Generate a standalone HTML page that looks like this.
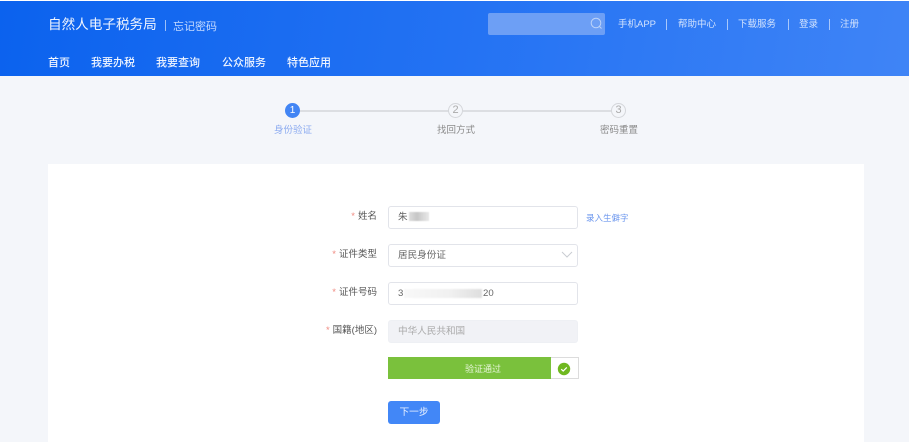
<!DOCTYPE html>
<html><head><meta charset="utf-8">
<style>
html,body{margin:0;padding:0;width:909px;height:443px;overflow:hidden;background:#fff}
body{position:relative;font-family:"Liberation Sans","Noto Sans CJK SC",sans-serif}
div,span{position:absolute;white-space:nowrap;box-sizing:border-box}
.t{line-height:16px;height:16px;filter:blur(.3px)}
.hd{left:0;top:1px;width:909px;height:75px;background:linear-gradient(100deg,#0b62ee 0%,#2372f3 50%,#3f84f6 100%)}
.nav{top:54px;color:#eef4ff;font-size:11px;font-weight:500}
.top{top:16px;color:#d3e3fd;font-size:9.5px}
.sep{width:1px;height:11px;top:19px;background:#a9c8fb}
.lb{color:#555;font-size:9.5px;text-align:right;right:532px}
.lb b{color:#f08a80;font-weight:400;margin-right:3px}
.in{left:388px;width:190px;height:23px;background:#fff;border:1px solid #e2e4ea;border-radius:3px}
.v{left:398px;color:#666;font-size:9.6px}
.st{color:#8a8a8a;font-size:9.5px}
.c{width:15px;height:15px;border-radius:50%;top:103px;border:1px solid #d4d6da;background:#f4f6fa;color:#aaa;font-size:11px;line-height:13px;text-align:center}
.ln{height:2px;top:110px;background:#dcdee2}
</style></head>
<body>
<div style="left:0;top:76px;width:909px;height:366px;background:#f4f6fa"></div>
<div class="hd"></div>
<div class="t" style="left:48px;top:17px;color:#f0f5ff;font-size:13.6px;">自然人电子税务局</div>
<div style="left:165px;top:20px;width:1px;height:11px;background:#9dc0f8"></div>
<div class="t" style="left:173px;top:18px;color:#c4daff;font-size:11px;line-height:18px">忘记密码</div>
<div class="t nav" style="left:48px;top:55px">首页</div>
<div class="t nav" style="left:91px;top:55px">我要办税</div>
<div class="t nav" style="left:156px;top:55px">我要查询</div>
<div class="t nav" style="left:222px;top:55px">公众服务</div>
<div class="t nav" style="left:287px;top:55px">特色应用</div>

<div style="left:488px;top:13px;width:117px;height:22px;background:#6d9ff5;border-radius:2px"></div>
<svg style="position:absolute;left:588px;top:15px" width="16" height="16" viewBox="0 0 16 16" fill="none" stroke="#bcd3f9" stroke-width="1"><circle cx="8" cy="8" r="4.8"/><path d="M11.5 11.5L13.5 13.5"/></svg>
<div class="t top" style="left:618px;top:17px">手机APP</div>
<div class="sep" style="left:666px"></div>
<div class="t top" style="left:678px;top:17px">帮助中心</div>
<div class="sep" style="left:727px"></div>
<div class="t top" style="left:738px;top:17px">下载服务</div>
<div class="sep" style="left:788px"></div>
<div class="t top" style="left:799px;top:17px">登录</div>
<div class="sep" style="left:829px"></div>
<div class="t top" style="left:840px;top:17px">注册</div>

<div class="ln" style="left:300px;width:149px"></div>
<div class="ln" style="left:463px;width:149px"></div>
<div class="c" style="left:285px;background:#4285f4;border-color:#4285f4;color:#fff;font-size:10px;">1</div>
<div class="c" style="left:448px">2</div>
<div class="c" style="left:611px">3</div>
<div class="t st" style="left:274px;top:123px;color:#8cabf0">身份验证</div>
<div class="t st" style="left:437px;top:123px">找回方式</div>
<div class="t st" style="left:600px;top:123px">密码重置</div>

<div style="left:48px;top:164px;width:816px;height:278px;background:#fff"></div>

<div class="t lb" style="top:209px"><b>*</b>姓名</div>
<div class="in" style="top:206px"></div>
<div class="t v" style="top:210px">朱</div>
<div style="left:409px;top:212px;width:20px;height:9px;filter:blur(.6px);background:linear-gradient(90deg,#ddd,#c6c6c6 40%,#d8d8d8 70%,#e8e8e8)"></div>
<div class="t" style="left:586px;top:210px;font-size:8.5px;color:#6e98ee">录入生僻字</div>

<div class="t lb" style="top:247px"><b>*</b>证件类型</div>
<div class="in" style="top:244px"></div>
<div class="t v" style="top:248px">居民身份证</div>
<svg style="position:absolute;left:560px;top:250px" width="14" height="10" viewBox="0 0 14 10" fill="none" stroke="#c9ccd2" stroke-width="1"><path d="M2 2L7 7L12 2"/></svg>

<div class="t lb" style="top:285px"><b>*</b>证件号码</div>
<div class="in" style="top:282px"></div>
<div class="t v" style="top:286px">3</div>
<div style="left:404px;top:289px;width:78px;height:9px;filter:blur(.8px);background:linear-gradient(90deg,#f8f8f8,#f0f0f0 60%,#dedede)"></div>
<div class="t v" style="left:483px;top:286px">20</div>

<div class="t lb" style="top:323px"><b>*</b>国籍(地区)</div>
<div class="in" style="top:320px;background:#f1f2f6;border-color:#eef0f4"></div>
<div class="t v" style="top:324px;color:#aaa">中华人民共和国</div>

<div style="left:388px;top:357px;width:191px;height:22px;background:#fff;border:1px solid #dcdcdc"></div>
<div style="left:388px;top:357px;width:163px;height:22px;background:#7ac13c"></div>
<div class="t" style="left:388px;top:361px;width:190px;text-align:center;color:#e6f5d8;font-size:9px">验证通过</div>
<svg style="position:absolute;left:557px;top:362px" width="14" height="14" viewBox="0 0 14 14"><circle cx="7" cy="7" r="6.2" fill="#6fb81f"/><path d="M4.2 7.2L6.2 9L9.8 5.4" fill="none" stroke="#fff" stroke-width="1.2"/></svg>

<div style="left:388px;top:401px;width:52px;height:23px;background:#4287f7;border-radius:3px"></div>
<div class="t" style="left:388px;top:405px;width:52px;color:#eaf2ff;font-size:9.7px;text-align:center">下一步</div>
</body></html>
